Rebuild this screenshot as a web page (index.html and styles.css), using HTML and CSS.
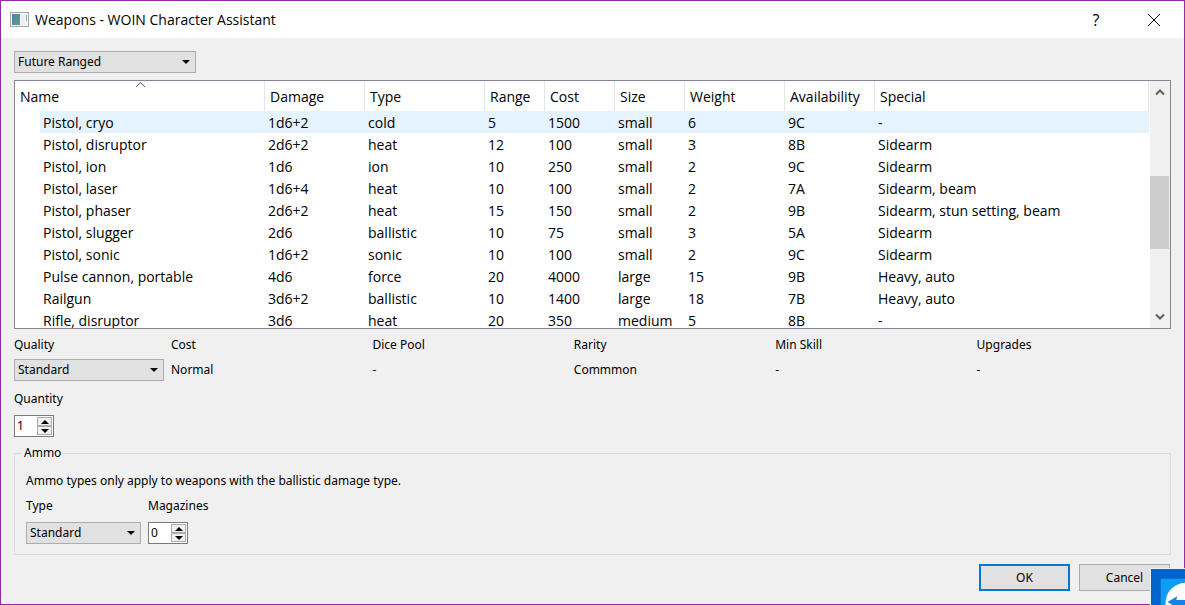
FILE: index.html
```html
<!DOCTYPE html>
<html lang="en">
<head>
    <title>Weapons - WOIN Character Assistant</title>
    <meta charset="utf-8">
    <meta name="viewport" content="width=device-width, initial-scale=1.0">
    <link rel="stylesheet" href="styles.css">
</head>
<body>
    <div class="dialog">
        <header class="titlebar">
            <svg class="app-icon" viewBox="0 0 19 16" width="19" height="16" aria-hidden="true">
                <defs>
                    <linearGradient id="pane" x1="0" y1="0" x2="1" y2="1">
                        <stop offset="0" stop-color="#4c80b0"/>
                        <stop offset="1" stop-color="#55a57c"/>
                    </linearGradient>
                </defs>
                <rect x="0.5" y="0.5" width="18" height="14" fill="#f4f6f7" stroke="#a4a8ac"/>
                <rect x="2" y="2" width="8" height="11" fill="url(#pane)"/>
                <rect x="11" y="2" width="4" height="11" fill="#eceff2"/>
                <rect x="16" y="3" width="1" height="6" fill="#7cb8a4"/>
            </svg>
            <h1>Weapons - WOIN Character Assistant</h1>
            <button class="title-button" type="button" aria-label="Help">?</button>
            <button class="title-button" type="button" aria-label="Close">
                <svg viewBox="0 0 12 12" width="12" height="12"><path d="M0 0L12 12M12 0L0 12" stroke="#000" fill="none"/></svg>
            </button>
        </header>

        <form class="content">
            <select class="category" aria-label="Category">
                <option>Future Ranged</option>
            </select>

            <div class="list">
                <div class="list-view">
                    <table>
                        <colgroup>
                            <col class="col-name">
                            <col class="col-damage">
                            <col class="col-type">
                            <col class="col-range">
                            <col class="col-cost">
                            <col class="col-size">
                            <col class="col-weight">
                            <col class="col-availability">
                            <col>
                        </colgroup>
                        <thead>
                            <tr>
                                <th>Name
                                    <svg class="sort" viewBox="0 0 9 5" width="9" height="5" aria-hidden="true"><path d="M0 5L4.500 0.500L9 5" stroke="#5a5a5a" fill="none"/></svg>
                                </th>
                                <th>Damage</th>
                                <th>Type</th>
                                <th>Range</th>
                                <th>Cost</th>
                                <th>Size</th>
                                <th>Weight</th>
                                <th>Availability</th>
                                <th>Special</th>
                            </tr>
                        </thead>
                        <tbody>
                            <tr class="hover"><td>Pistol, cryo</td><td>1d6+2</td><td>cold</td><td>5</td><td>1500</td><td>small</td><td>6</td><td>9C</td><td>-</td></tr>
                            <tr><td>Pistol, disruptor</td><td>2d6+2</td><td>heat</td><td>12</td><td>100</td><td>small</td><td>3</td><td>8B</td><td>Sidearm</td></tr>
                            <tr><td>Pistol, ion</td><td>1d6</td><td>ion</td><td>10</td><td>250</td><td>small</td><td>2</td><td>9C</td><td>Sidearm</td></tr>
                            <tr><td>Pistol, laser</td><td>1d6+4</td><td>heat</td><td>10</td><td>100</td><td>small</td><td>2</td><td>7A</td><td>Sidearm, beam</td></tr>
                            <tr><td>Pistol, phaser</td><td>2d6+2</td><td>heat</td><td>15</td><td>150</td><td>small</td><td>2</td><td>9B</td><td>Sidearm, stun setting, beam</td></tr>
                            <tr><td>Pistol, slugger</td><td>2d6</td><td>ballistic</td><td>10</td><td>75</td><td>small</td><td>3</td><td>5A</td><td>Sidearm</td></tr>
                            <tr><td>Pistol, sonic</td><td>1d6+2</td><td>sonic</td><td>10</td><td>100</td><td>small</td><td>2</td><td>9C</td><td>Sidearm</td></tr>
                            <tr><td>Pulse cannon, portable</td><td>4d6</td><td>force</td><td>20</td><td>4000</td><td>large</td><td>15</td><td>9B</td><td>Heavy, auto</td></tr>
                            <tr><td>Railgun</td><td>3d6+2</td><td>ballistic</td><td>10</td><td>1400</td><td>large</td><td>18</td><td>7B</td><td>Heavy, auto</td></tr>
                            <tr><td>Rifle, disruptor</td><td>3d6</td><td>heat</td><td>20</td><td>350</td><td>medium</td><td>5</td><td>8B</td><td>-</td></tr>
                        </tbody>
                    </table>
                </div>
                <div class="scrollbar" aria-hidden="true">
                    <svg viewBox="0 0 10 8" width="10" height="8"><path d="M1 6.500L5 2.500L9 6.500" stroke="#606060" stroke-width="2" fill="none"/></svg>
                    <div class="track"><div class="thumb"></div></div>
                    <svg viewBox="0 0 10 8" width="10" height="8"><path d="M1 1.500L5 5.500L9 1.500" stroke="#606060" stroke-width="2" fill="none"/></svg>
                </div>
            </div>

            <div class="quality">
                <div class="field">
                    <label for="quality">Quality</label>
                    <select id="quality"><option>Standard</option></select>
                </div>
                <div class="field"><span>Cost</span><span class="value">Normal</span></div>
                <div class="field"><span>Dice Pool</span><span class="value">-</span></div>
                <div class="field"><span>Rarity</span><span class="value">Commmon</span></div>
                <div class="field"><span>Min Skill</span><span class="value">-</span></div>
                <div class="field"><span>Upgrades</span><span class="value">-</span></div>
            </div>

            <div class="field quantity">
                <label for="quantity">Quantity</label>
                <div class="spin">
                    <input id="quantity" type="text" inputmode="numeric" value="1">
                    <div class="steps">
                        <button class="up" type="button" aria-label="More"></button>
                        <button class="down" type="button" aria-label="Fewer"></button>
                    </div>
                </div>
            </div>

            <fieldset class="ammo">
                <legend>Ammo</legend>
                <p>Ammo types only apply to weapons with the ballistic damage type.</p>
                <div class="ammo-row">
                    <div class="field">
                        <label for="ammo-type">Type</label>
                        <select id="ammo-type"><option>Standard</option></select>
                    </div>
                    <div class="field">
                        <label for="magazines">Magazines</label>
                        <div class="spin">
                            <input id="magazines" type="text" inputmode="numeric" value="0">
                            <div class="steps">
                                <button class="up" type="button" aria-label="More magazines"></button>
                                <button class="down" type="button" aria-label="Fewer magazines"></button>
                            </div>
                        </div>
                    </div>
                </div>
            </fieldset>

            <div class="buttons">
                <button class="push default" type="button">OK</button>
                <button class="push" type="button">Cancel</button>
            </div>
        </form>
    </div>

    <svg class="remote-badge" viewBox="0 0 35 37" width="35" height="37" aria-hidden="true">
        <rect width="35" height="37" fill="#0064cc"/>
        <rect x="10" y="10" width="40" height="40" rx="1" fill="#109cf4"/>
        <circle cx="36" cy="35" r="21" fill="#fff"/>
        <path d="M17 34L27 28L26 32H35V37H22Z" fill="#1484e4"/>
    </svg>
</body>
</html>
```
FILE: styles.css
```css
* {
    box-sizing: border-box;
}
body {
    margin: 0;
    font-family: "Noto Sans", sans-serif;
    font-size: 12px;
    line-height: 16px;
    color: #000;
    background-color: #f0f0f0;
}
button, input, select {
    font: inherit;
    color: inherit;
}
.dialog {
    display: flex;
    flex-direction: column;
    height: 100vh;
    border: 1px solid #9529a4;
}

/* title bar */
.titlebar {
    display: flex;
    align-items: center;
    height: 37px;
    padding: 0 1px 0 9px;
    background-color: #fff;
    font-family: "Open Sans", sans-serif;
}
.app-icon {
    margin-right: 6px;
}
.titlebar h1 {
    flex: 1;
    margin: 0;
    font-size: 14px;
    font-weight: normal;
}
.title-button {
    display: flex;
    align-items: center;
    justify-content: center;
    width: 58px;
    height: 36px;
    padding: 0;
    border: 0;
    background: none;
    font-size: 16px;
}

.content {
    display: flex;
    flex: 1;
    flex-direction: column;
    min-height: 0;
    padding: 13px;
}
select {
    width: 100%;
    height: 22px;
    padding: 0 20px 0 3px;
    border: 1px solid #adadad;
    border-radius: 0;
    appearance: none;
    background: #e1e1e1 url("data:image/svg+xml,%3Csvg xmlns='http://www.w3.org/2000/svg' width='8' height='4'%3E%3Cpath d='M0 0h8L4 4z'/%3E%3C/svg%3E") no-repeat right 5px center;
}
.category {
    width: 182px;
}

/* weapon list */
.list {
    display: flex;
    flex: 1;
    min-height: 0;
    margin-top: 7px;
    border: 1px solid #828790;
    background-color: #fff;
    font-family: "Open Sans", sans-serif;
    font-size: 14px;
}
.list-view {
    flex: 1;
    overflow: hidden;
}
table {
    width: 100%;
    table-layout: fixed;
    border-collapse: separate;
    border-spacing: 0;
}
th, td {
    height: 22px;
    padding: 2px 3px 0;
    text-align: left;
    white-space: nowrap;
}
th {
    position: relative;
    height: 30px;
    padding: 2px 5px 0;
    border-right: 1px solid #e5e5e5;
    font-weight: normal;
}
td:first-child {
    padding-left: 28px;
}
.hover td {
    background-color: #e5f3ff;
}
.hover td:first-child {
    background: linear-gradient(to right, #fff 25px, #e5f3ff 25px);
}
.sort {
    position: absolute;
    top: 1px;
    left: 50%;
    margin-left: -4px;
}
.col-name {
    width: 250px;
}
.col-damage, .col-weight {
    width: 100px;
}
.col-type {
    width: 120px;
}
.col-range {
    width: 60px;
}
.col-cost, .col-size {
    width: 70px;
}
.col-availability {
    width: 90px;
}
.scrollbar {
    display: flex;
    flex-direction: column;
    align-items: center;
    width: 21px;
    padding: 7px 1px 7px 0;
    border-left: 1px solid #fff;
    background-color: #f0f0f0;
}
.track {
    flex: 1;
    width: 100%;
    padding-top: 80px;
}
.thumb {
    height: 73px;
    background-color: #cdcdcd;
}

/* form fields */
.field {
    display: flex;
    flex-direction: column;
    gap: 6px;
}
.value {
    line-height: 22px;
}
.quality {
    display: grid;
    grid-template-columns: 150px repeat(5, 1fr);
    gap: 7px;
    margin-top: 8px;
}
.quantity {
    margin-top: 10px;
    gap: 8px;
}
.spin {
    display: flex;
    width: 40px;
    height: 22px;
    padding: 1px;
    border: 1px solid #7a7a7a;
    background-color: #fff;
}
.spin input {
    flex: 1;
    width: 0;
    padding: 0 1px;
    border: 0;
    outline: 0;
    background: none;
}
.steps {
    display: flex;
    flex-direction: column;
    width: 15px;
}
.steps button {
    flex: 1;
    padding: 0;
    border: 1px solid #adadad;
    background: #f0f0f0 no-repeat center;
}
.steps .up {
    background-image: url("data:image/svg+xml,%3Csvg xmlns='http://www.w3.org/2000/svg' width='8' height='4'%3E%3Cpath d='M0 4h8L4 0z'/%3E%3C/svg%3E");
}
.steps .down {
    background-image: url("data:image/svg+xml,%3Csvg xmlns='http://www.w3.org/2000/svg' width='8' height='4'%3E%3Cpath d='M0 0h8L4 4z'/%3E%3C/svg%3E");
}
.ammo {
    margin: 8px 0 0;
    padding: 12px 11px 10px;
    border: 1px solid #dcdcdc;
}
.ammo legend {
    margin-left: -4px;
    padding: 0 2px;
}
.ammo p {
    margin: 0 0 9px;
}
.ammo-row {
    display: flex;
    gap: 7px;
}
.ammo-row .field {
    gap: 8px;
}
.ammo-row select {
    width: 115px;
}

.buttons {
    display: flex;
    justify-content: flex-end;
    gap: 9px;
    margin-top: 9px;
    padding-right: 1px;
}
.push {
    width: 91px;
    height: 27px;
    padding: 0;
    border: 1px solid #adadad;
    background-color: #e1e1e1;
}
.push.default {
    border: 2px solid #0078d7;
}

/* remote support badge that floats over the corner */
.remote-badge {
    position: fixed;
    right: 0;
    bottom: 0;
    border-top: 1px solid #e8f0f8;
    border-left: 1px solid #e8f0f8;
}
```
